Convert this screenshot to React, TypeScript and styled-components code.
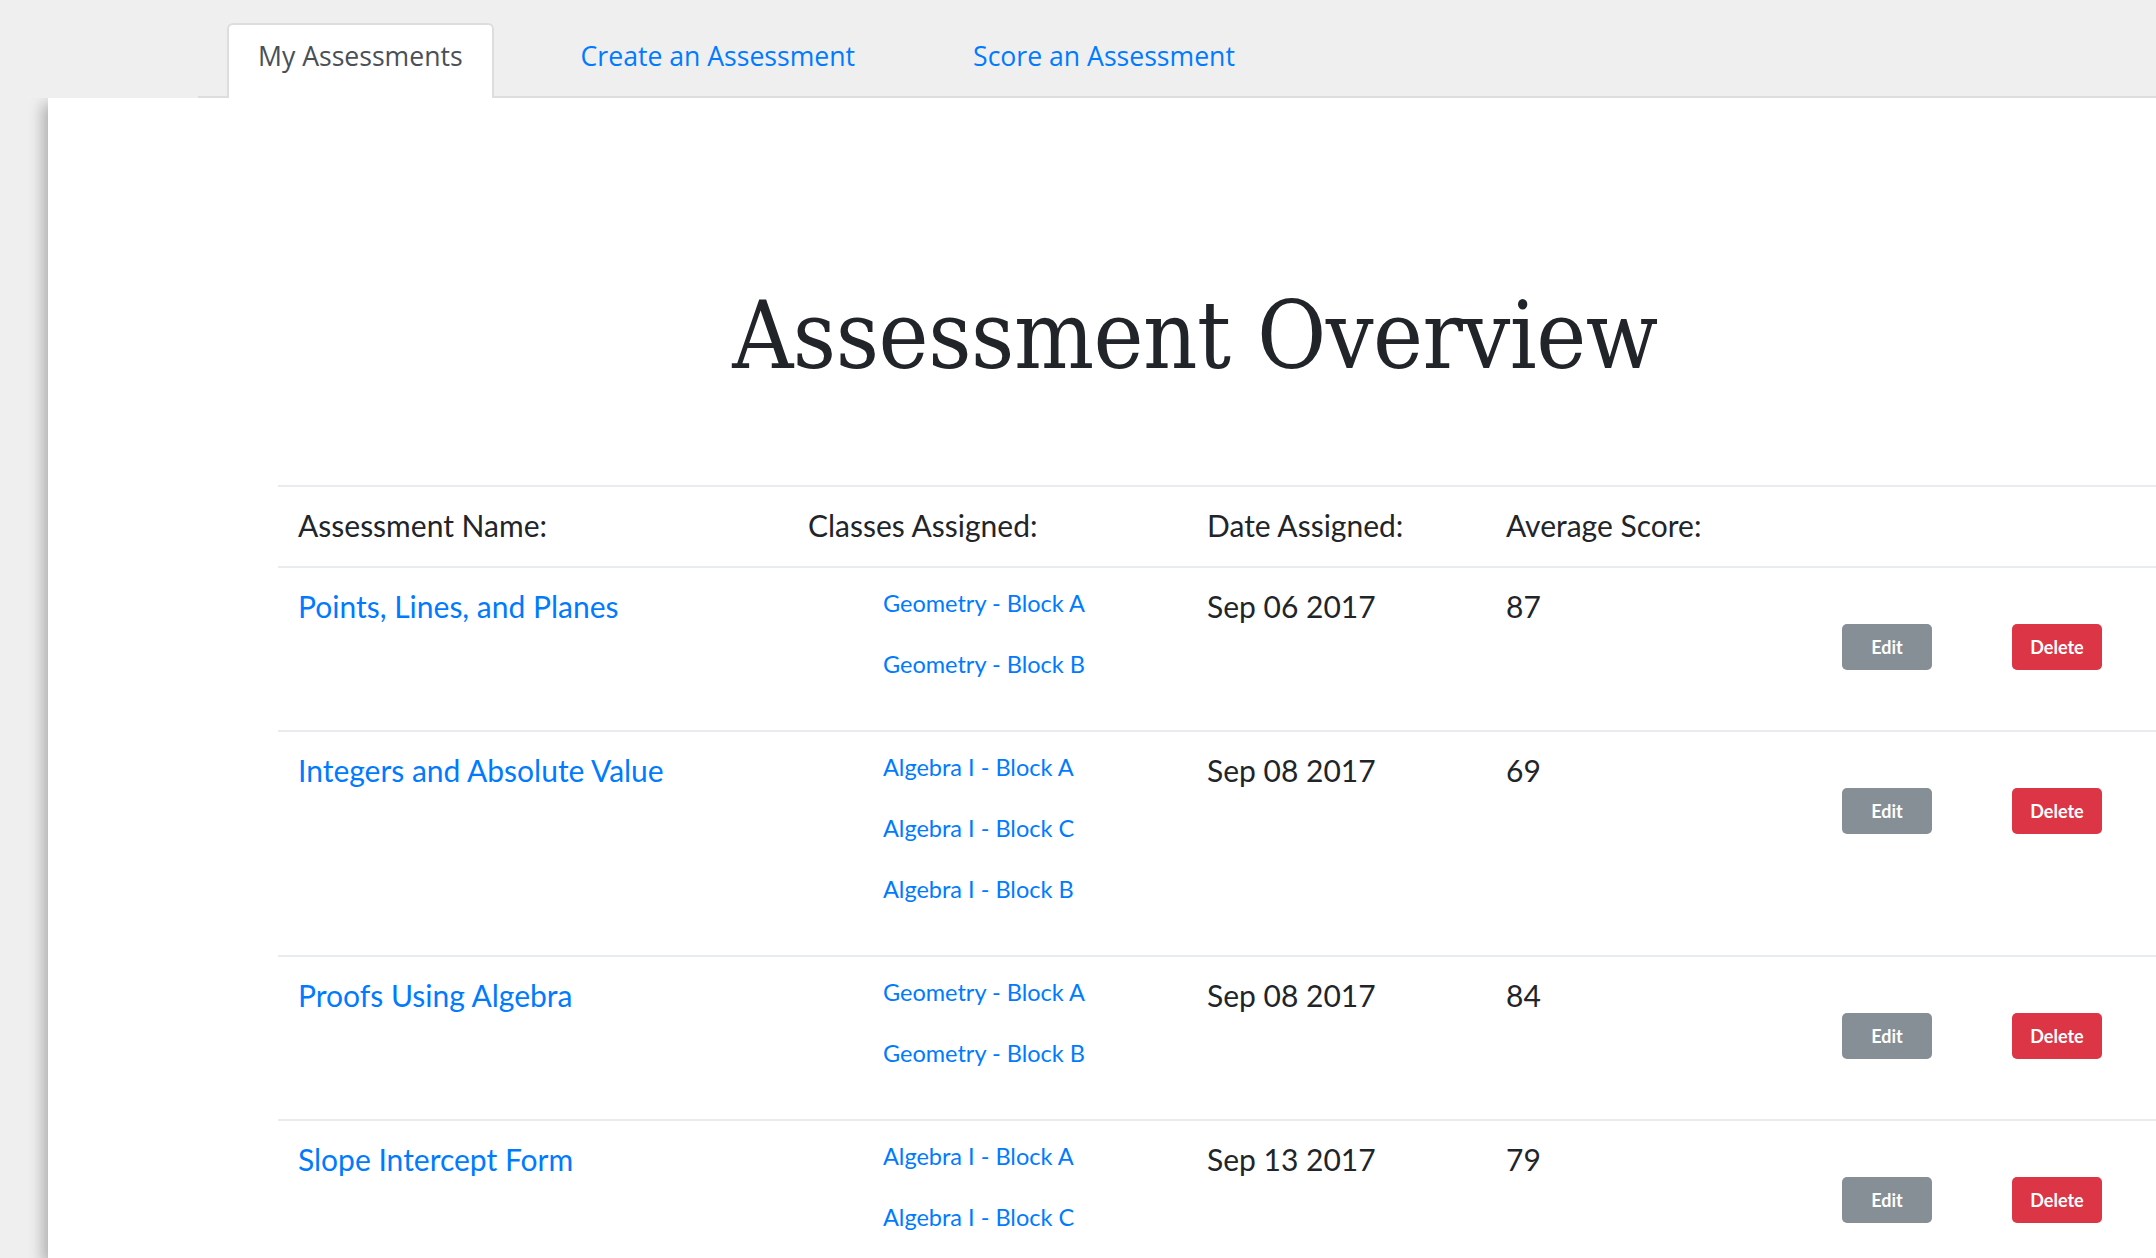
import React from "react";
import styled, { createGlobalStyle } from "styled-components";

const Global = createGlobalStyle`
  html, body {
    margin: 0;
    padding: 0;
    background: #efefef;
    overflow: hidden;
  }
  * { box-sizing: border-box; }
`;

const Page = styled.div`
  width: 2156px;
  height: 1258px;
  background: #efefef;
  display: flex;
  flex-direction: column;
  overflow: hidden;
`;

const NavBar = styled.nav`
  padding: 23px 0 0 198px;
  background: #efefef;
  position: relative;
  z-index: 2;
`;

const Tabs = styled.ul`
  display: flex;
  gap: 56px;
  margin: 0;
  padding: 0 0 0 29px;
  list-style: none;
  border-bottom: 2px solid #dddddd;
`;

const Tab = styled.li<{ $active?: boolean }>`
  margin-bottom: -2px;
  padding: 11px 29px 21px;
  border: 2px solid ${(p) => (p.$active ? "#dddddd" : "transparent")};
  border-bottom: none;
  border-radius: 6px 6px 0 0;
  background: ${(p) => (p.$active ? "#ffffff" : "transparent")};
  font-family: "Open Sans", "Noto Sans", sans-serif;
  font-size: 26.6px;
  line-height: 41px;
  color: ${(p) => (p.$active ? "#495057" : "#007bff")};
  white-space: nowrap;
`;

const Card = styled.main`
  flex: 1;
  margin-left: 48px;
  background: #ffffff;
  box-shadow: -5px 6px 14px rgba(0, 0, 0, 0.28);
  overflow: hidden;
  position: relative;
  z-index: 1;
`;

const Content = styled.div`
  margin-left: 230px;
  width: 1834px;
`;

const Title = styled.h1`
  margin: 181px 0 93px;
  text-align: center;
  font-family: "DejaVu Serif Condensed", "DejaVu Serif", serif;
  font-stretch: semi-condensed;
  font-weight: 400;
  font-size: 94px;
  line-height: 113px;
  letter-spacing: -0.5px;
  color: #212529;
`;

const Table = styled.div`
  width: 1900px;
  font-family: Lato, "Open Sans", sans-serif;
  color: #212529;
`;

const Row = styled.div`
  display: grid;
  grid-template-columns: 510px 399px 299px 336px 170px 1fr;
  border-top: 2px solid #e9ecef;
`;

const Cell = styled.div<{ $head?: boolean }>`
  padding: ${(p) => (p.$head ? "16px 20px 18px" : "16px 20px")};
  font-size: 30px;
  line-height: 45px;
  white-space: nowrap;
`;

const NameLink = styled.a`
  color: #007bff;
  text-decoration: none;
`;

const ClassList = styled.ul`
  margin: 0;
  padding: 5px 0 35px 95px;
  list-style: none;
`;

const ClassItem = styled.li`
  font-size: 23.5px;
  line-height: 61px;
  white-space: nowrap;
`;

const ClassLink = styled.a`
  color: #007bff;
  text-decoration: none;
`;

const ButtonCell = styled.div`
  padding: 56px 0 0 20px;
`;

const Button = styled.button<{ $variant: "secondary" | "danger" }>`
  width: 90px;
  height: 46px;
  border: none;
  border-radius: 5px;
  background: ${(p) => (p.$variant === "danger" ? "#dc3545" : "#868e96")};
  color: #ffffff;
  font-family: Lato, "Open Sans", sans-serif;
  font-weight: 700;
  font-size: 18px;
  line-height: 46px;
  padding: 0;
  text-align: center;
`;

type Assessment = {
  name: string;
  classes: string[];
  date: string;
  avg: string;
};

const data: Assessment[] = [
  {
    name: "Points, Lines, and Planes",
    classes: ["Geometry - Block A", "Geometry - Block B"],
    date: "Sep 06 2017",
    avg: "87",
  },
  {
    name: "Integers and Absolute Value",
    classes: ["Algebra I - Block A", "Algebra I - Block C", "Algebra I - Block B"],
    date: "Sep 08 2017",
    avg: "69",
  },
  {
    name: "Proofs Using Algebra",
    classes: ["Geometry - Block A", "Geometry - Block B"],
    date: "Sep 08 2017",
    avg: "84",
  },
  {
    name: "Slope Intercept Form",
    classes: ["Algebra I - Block A", "Algebra I - Block C"],
    date: "Sep 13 2017",
    avg: "79",
  },
];

export default function App() {
  return (
    <Page>
      <Global />
      <NavBar>
        <Tabs>
          <Tab $active>My Assessments</Tab>
          <Tab>Create an Assessment</Tab>
          <Tab>Score an Assessment</Tab>
        </Tabs>
      </NavBar>
      <Card>
        <Content>
          <Title>Assessment Overview</Title>
          <Table>
            <Row>
              <Cell $head>Assessment Name:</Cell>
              <Cell $head>Classes Assigned:</Cell>
              <Cell $head>Date Assigned:</Cell>
              <Cell $head>Average Score:</Cell>
              <Cell $head />
              <Cell $head />
            </Row>
            {data.map((a, i) => (
              <Row key={i}>
                <Cell>
                  <NameLink href="#">{a.name}</NameLink>
                </Cell>
                <div>
                  <ClassList>
                    {a.classes.map((c) => (
                      <ClassItem key={c}>
                        <ClassLink href="#">{c}</ClassLink>
                      </ClassItem>
                    ))}
                  </ClassList>
                </div>
                <Cell>{a.date}</Cell>
                <Cell>{a.avg}</Cell>
                <ButtonCell>
                  <Button $variant="secondary">Edit</Button>
                </ButtonCell>
                <ButtonCell>
                  <Button $variant="danger">Delete</Button>
                </ButtonCell>
              </Row>
            ))}
          </Table>
        </Content>
      </Card>
    </Page>
  );
}
